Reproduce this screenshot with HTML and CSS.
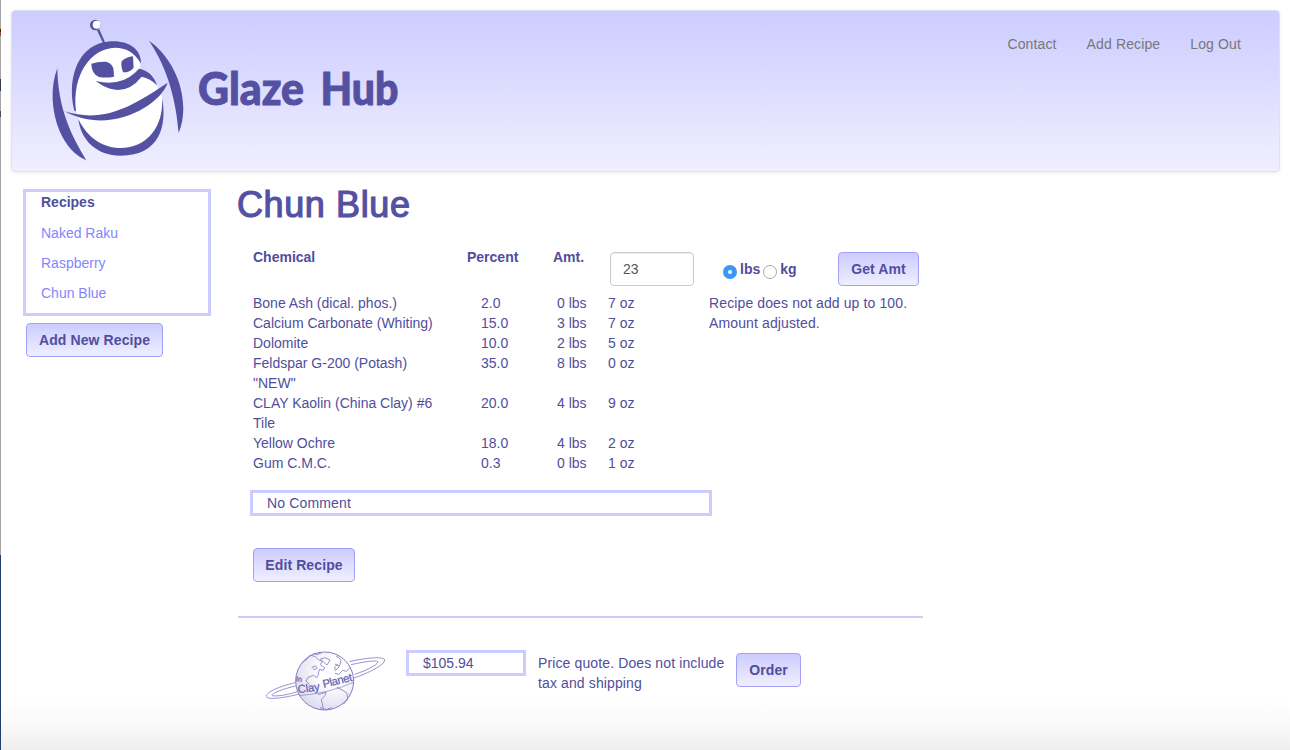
FILE: index.html
```html
<!DOCTYPE html>
<html lang="en">
<head>
<meta charset="utf-8">
<title>Glaze Hub</title>
<link rel="stylesheet" href="styles.css">
</head>
<body>
<header class="header">
  <div class="brand">
    <svg class="robot" viewBox="150 54 408 432" aria-hidden="true">
      <path fill="#fff" d="M228 333C220 260 240 190 285 155C325 128 385 130 410 155C424 175 425 205 412 216Q450 226 470 255L486 290C496 380 450 452 362 452C300 452 250 405 236 358Z"/>
      <g fill="#5451a3">
        <circle cx="286" cy="75" r="16"/>
        <path d="M291 91L298 88L316 129L310 131Z"/>
        <path d="M224 334C200 245 228 124 341 124C390 124 424 150 423 191C404 157 378 143 345 143C272 145 215 225 228 333Z"/>
        <path d="M274 191Q295 184 318 185Q340 191 341 212L342 230Q318 235 297 231Q274 221 274 191Z"/>
        <path d="M399 169Q379 170 365 184Q362 198 369 217Q389 218 401 203Z"/>
        <path d="M287 243Q360 260 405 218L417 206Q457 213 471 256Q451 235 425 230Q375 293 306 256Z"/>
        <path d="M193 334C312 371 398 318 503 248C484 306 375 377 262 358Q226 351 193 334Z"/>
        <path d="M235 357C262 413 308 444 362 444C440 444 492 380 486 294C502 375 480 467 362 467C290 467 242 420 235 357Z"/>
        <path d="M172 205C151 260 153 330 179 394Q209 461 259 481C211 402 174 323 172 205Z"/>
        <path d="M447 122C528 178 575 303 536 399C528 304 505 208 447 122Z"/>
      </g>
      <circle cx="290" cy="74" r="12" fill="#fff"/>
    </svg>
    <svg class="wordmark" viewBox="0 0 210 80" role="img" aria-label="Glaze Hub">
      <text x="2" y="53.5" textLength="106" lengthAdjust="spacingAndGlyphs">Glaze</text>
      <text x="124.500" y="53.5" textLength="78" lengthAdjust="spacingAndGlyphs">Hub</text>
    </svg>
  </div>
  <nav class="nav"><a>Contact</a><a>Add Recipe</a><a>Log Out</a></nav>
</header>
<div class="page">
  <aside class="sidebar">
    <div class="recipes">
      <b>Recipes</b>
      <a>Naked Raku</a><a>Raspberry</a><a>Chun Blue</a>
    </div>
    <button class="btn btn-add">Add New Recipe</button>
  </aside>
  <main class="main">
    <h1>Chun Blue</h1>
    <div class="heads">
      <b>Chemical</b><b>Percent</b><b>Amt.</b>
      <input class="amount" type="text" value="23">
      <div class="units"><i class="radio on"></i><b>lbs</b><i class="radio"></i><b>kg</b></div>
      <button class="btn btn-get">Get Amt</button>
    </div>
    <div class="body">
      <div class="rows">
        <div class="row"><span>Bone Ash (dical. phos.)</span><span>2.0</span><span>0 lbs</span><span>7 oz</span></div>
        <div class="row"><span>Calcium Carbonate (Whiting)</span><span>15.0</span><span>3 lbs</span><span>7 oz</span></div>
        <div class="row"><span>Dolomite</span><span>10.0</span><span>2 lbs</span><span>5 oz</span></div>
        <div class="row"><span>Feldspar G-200 (Potash) "NEW"</span><span>35.0</span><span>8 lbs</span><span>0 oz</span></div>
        <div class="row"><span>CLAY Kaolin (China Clay) #6 Tile</span><span>20.0</span><span>4 lbs</span><span>9 oz</span></div>
        <div class="row"><span>Yellow Ochre</span><span>18.0</span><span>4 lbs</span><span>2 oz</span></div>
        <div class="row"><span>Gum C.M.C.</span><span>0.3</span><span>0 lbs</span><span>1 oz</span></div>
      </div>
      <div class="note">Recipe does not add up to 100.<br>Amount adjusted.</div>
    </div>
    <div class="box comment">No Comment</div>
    <button class="btn btn-edit">Edit Recipe</button>
    <div class="quote">
      <svg class="planet" viewBox="0 0 384 216" aria-hidden="true">
        <defs><radialGradient id="globe" cx=".65" cy=".35" r=".75"><stop offset=".3" stop-color="#fff"/><stop offset="1" stop-color="#d9d8ee"/></radialGradient></defs>
        <g fill="none" stroke="#7f7cc4" stroke-width="2.5" stroke-linejoin="round">
          <path d="M99 113C38 128 8 146 14 156C20 165 70 158 112 147M101 123C52 134 24 148 31 152C40 155 78 150 108 139"/>
          <path d="M262 50C322 36 367 35 368 45C369 59 320 84 276 99M267 59C316 48 350 45 348 51C346 61 306 79 278 88"/>
          <circle cx="188" cy="108" r="87" fill="url(#globe)" stroke-width="3"/>
          <path d="M119 53Q133 47 145 30L160 35L170 45L181 49L175 59L188 68L184 76L172 73L168 92L164 98L155 91L138 97L132 108L143 119"/>
          <path d="M175 42L189 38L204 45L195 60L184 51ZM149 67L160 63L166 68L157 75L153 69M223 34Q239 40 236 52L229 69L220 76L218 67L227 57M218 57L231 63M219 85L230 88L242 76L254 79L264 67M153 24L164 29L178 24"/>
          <path d="M168 149L192 142L190 150L178 164L184 190M224 126L244 137L255 145L257 163L244 178M174 188L193 194L209 188"/>
          <path d="M112 152Q205 144 274 112" stroke-width="2"/>
        </g>
        <g class="planet-text">
          <text x="101" y="109" font-size="22" transform="rotate(5 101 109)">In</text>
          <text x="109" y="145" font-size="34" textLength="66" transform="rotate(-8 109 145)">Clay</text>
          <text x="185" y="129" font-size="34" textLength="90" transform="rotate(-14 185 129)">Planet</text>
        </g>
      </svg>
      <div class="box price">$105.94</div>
      <p>Price quote. Does not include tax and shipping</p>
      <button class="btn btn-order">Order</button>
    </div>
  </main>
</div>
</body>
</html>
```
FILE: styles.css
```css
* { box-sizing: border-box; }
html { background: #fff; }
body {
  margin: 0;
  height: 750px;
  padding: 10px 10px 0 11px;
  overflow: hidden;
  color: #504e9c;
  font: 14px/20px "Liberation Sans", Arial, sans-serif;
  background:
    linear-gradient(#a3a3a3 0 26px, #c9a067 26px 29px, #332725 29px 32px, #9b493b 32px 36px, #a6a6a6 36px 79px, #34384d 79px 91px, #a6a6a6 91px 111px, #454b60 111px 117px, #a3a3a3 117px 555px, #20406b 555px 750px) left top / 1px 750px no-repeat,
    linear-gradient(#fff 0, #fff 700px, #fafafa 724px, #eee 750px);
}
.header {
  height: 162px;
  display: flex;
  justify-content: space-between;
  align-items: flex-start;
  border: 1px solid #e1dff0;
  border-radius: 4px;
  background: linear-gradient(#ccccff, #f0efff);
  box-shadow: 0 1px 4px rgba(0, 0, 0, .07);
}
.brand { display: flex; padding: 7px 0 0 38px; }
.robot { width: 136px; height: 144px; }
.wordmark { width: 210px; height: 80px; margin: 33px 0 0 10px; overflow: visible; }
.wordmark text {
  font: 900 46px Lato, sans-serif;
  fill: #5451a3;
  stroke: #5451a3;
  stroke-width: 1px;
  stroke-linejoin: round;
}
.nav { display: flex; gap: 30px; padding: 23px 38px 0 0; color: #777; letter-spacing: .13px; }
.page { display: flex; padding: 17px 0 0 12px; }
.sidebar { width: 188px; }
.recipes {
  height: 127px;
  padding: 0 15px;
  border: 3px solid #ccccff;
  display: flex;
  flex-direction: column;
  gap: 10px;
}
.recipes b { margin-bottom: 1px; }
.recipes a { color: #8585ff; }
.btn {
  display: block;
  height: 34px;
  padding: 0;
  border: 1px solid #a3a0fa;
  border-radius: 4px;
  background: linear-gradient(#ccccff, #f0efff);
  color: #504e9c;
  font: bold 14px/20px "Liberation Sans", Arial, sans-serif;
  letter-spacing: .1px;
}
.btn-add { width: 137px; margin: 7px 0 0 3px; }
.main { width: 685px; margin-left: 27px; }
h1 {
  margin: -4px 0 0 -1px;
  font-size: 36px;
  line-height: 40px;
  font-weight: 400;
  letter-spacing: .6px;
  color: #5451a3;
  -webkit-text-stroke: 1.2px #5451a3;
}
.heads {
  height: 46px;
  margin-top: 22px;
  display: grid;
  grid-template-columns: 214px 86px 57px 113px 115px 81px;
  padding-left: 15px;
  align-items: start;
}
.amount {
  width: 84px;
  height: 34px;
  margin-top: 5px;
  padding: 0 12px;
  border: 1px solid #ccc;
  border-radius: 4px;
  font: 14px/20px "Liberation Sans", Arial, sans-serif;
  color: #555;
  box-shadow: inset 0 1px 1px rgba(0, 0, 0, .075);
}
.units { display: flex; align-items: center; height: 20px; margin-top: 12px; }
.radio { width: 14px; height: 14px; margin: 5px 3px 0 0; border: 1px solid #aaa; border-radius: 50%; background: #fff; }
.radio.on { border: 5px solid #3997fb; }
.units b + .radio { margin-left: 3px; }
.btn-get { width: 81px; margin-top: 5px; }
.body { display: flex; padding-left: 15px; }
.rows { width: 456px; }
.row { display: grid; grid-template-columns: 228px 76px 51px 60px; }
.row span:first-child { width: 184px; }
.note, .quote p { letter-spacing: .12px; }
.box { border: 3px solid #ccccff; padding: 0 14px; height: 26px; }
.comment { width: 462px; margin: 17px 0 0 12px; letter-spacing: .15px; }
.btn-edit { width: 102px; margin: 32px 0 0 15px; }
.quote {
  display: flex;
  align-items: flex-start;
  margin-top: 34px;
  padding: 27px 0 0 24px;
  border-top: 2px solid #ccccff;
}
.planet { width: 128px; height: 72px; }
.planet-text { fill: #6764b1; font-family: "Liberation Sans", Arial, sans-serif; stroke: #6764b1; stroke-width: .8px; }
.price { width: 120px; margin: 5px 0 0 16px; }
.quote p { width: 198px; margin: 8px 0 0 12px; }
.btn-order { width: 65px; margin-top: 8px; }
```
